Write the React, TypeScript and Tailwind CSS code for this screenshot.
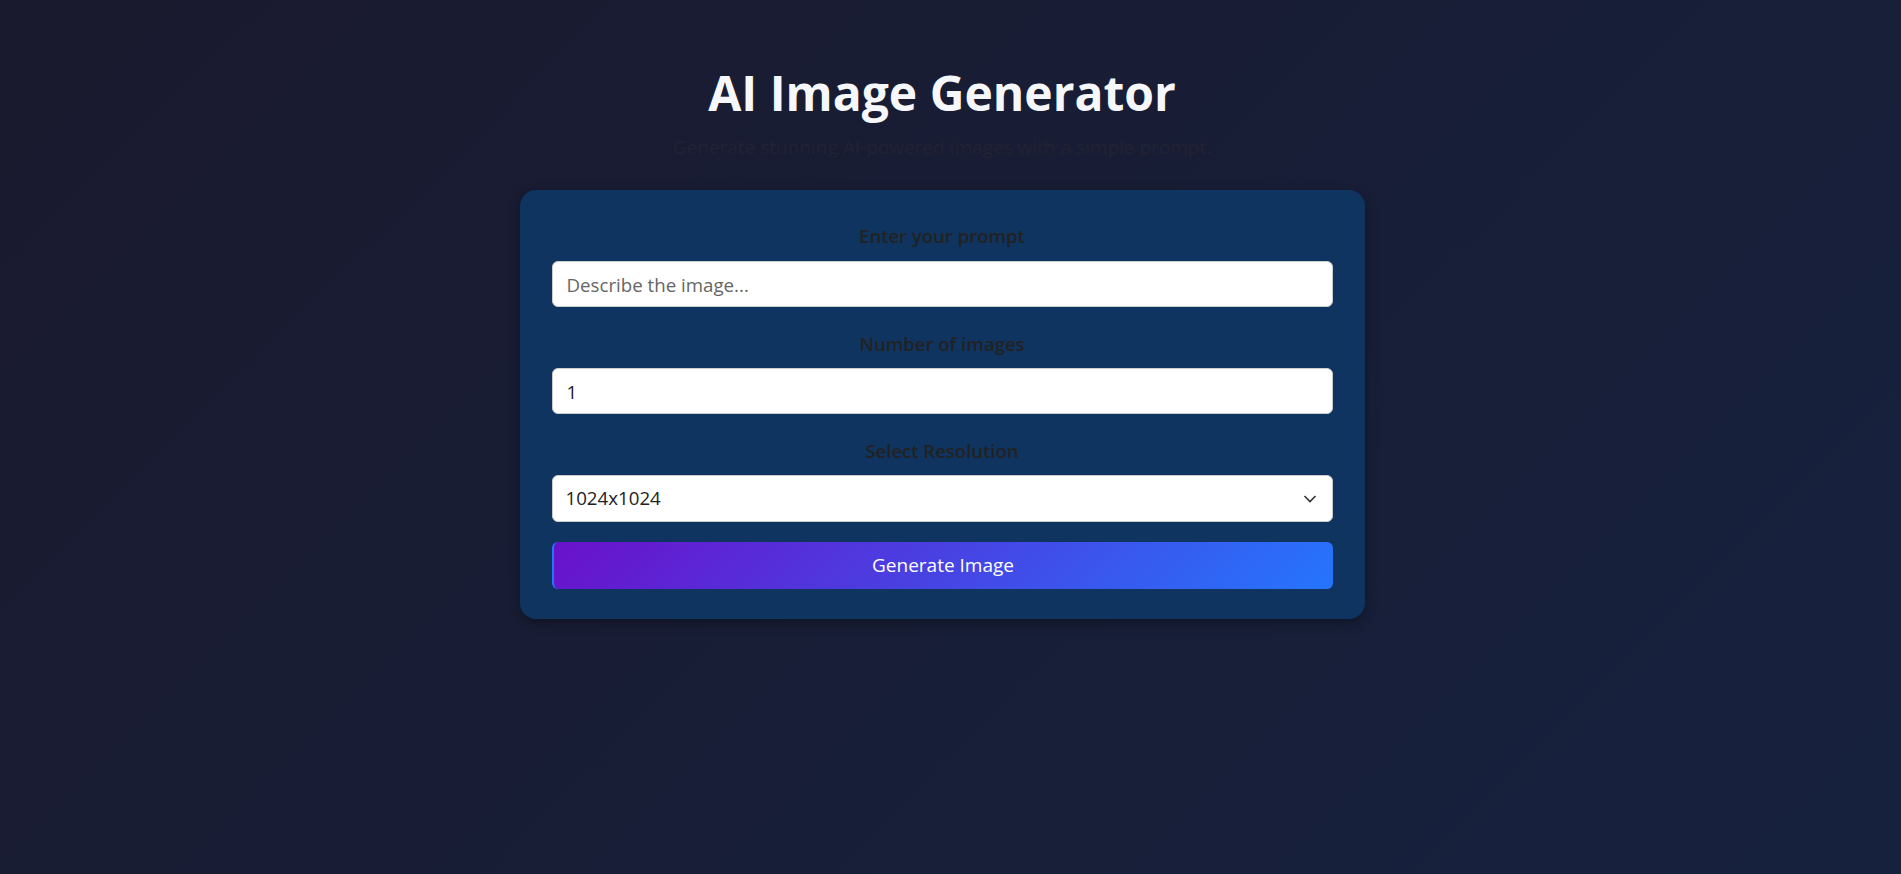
import React, { useState } from "react";

const font = { fontFamily: '"Open Sans", "Noto Sans", sans-serif' };

const App = () => {
  const [prompt, setPrompt] = useState("");
  const [count, setCount] = useState("1");
  const [size, setSize] = useState("1024x1024");

  return (
    <div
      className="min-h-screen w-full bg-[linear-gradient(135deg,#1a1a2e,#16213e)] pr-[17px] pt-[64px]"
      style={font}
    >
      <div className="flex flex-col items-center">
        {/* Heading */}
        <h1 className="text-[48px] font-bold leading-[58px] text-[#f6f7fb]">AI Image Generator</h1>
        <p className="mt-[12px] text-[19px] leading-[27px] text-[#222233]">
          Generate stunning AI-powered images with a simple prompt.
        </p>

        {/* Form card */}
        <div className="mt-[29px] w-[845px] rounded-2xl bg-[#0f3460] px-8 pt-8 pb-[30px] shadow-[0_4px_12px_rgba(0,0,0,0.35)]">
          <div className="flex flex-col">
            <label className="mb-[12px] block text-center text-[18.5px] font-semibold leading-[27px] text-[#222]">
              Enter your prompt
            </label>
            <input
              type="text"
              value={prompt}
              onChange={(e) => setPrompt(e.target.value)}
              placeholder="Describe the image..."
              className="h-[46px] w-full rounded-md border border-[#ccc] bg-white px-[14px] text-[18.7px] text-[#222] placeholder:text-[#666] outline-none"
            />
          </div>

          <div className="mt-[23px] flex flex-col">
            <label className="mb-[11px] block text-center text-[18.5px] font-semibold leading-[27px] text-[#222]">
              Number of images
            </label>
            <input
              type="text"
              value={count}
              onChange={(e) => setCount(e.target.value)}
              className="h-[46px] w-full rounded-md border border-[#ccc] bg-white px-[14px] text-[18.7px] text-[#222] outline-none"
            />
          </div>

          <div className="mt-[23px] flex flex-col">
            <label className="mb-[11px] block text-center text-[18.5px] font-semibold leading-[27px] text-[#222]">
              Select Resolution
            </label>
            <div className="relative">
              <select
                value={size}
                onChange={(e) => setSize(e.target.value)}
                className="h-[47px] w-full appearance-none rounded-md border border-[#ccc] bg-white px-[13px] text-[18.7px] text-[#222] outline-none"
              >
                <option value="256x256">256x256</option>
                <option value="512x512">512x512</option>
                <option value="1024x1024">1024x1024</option>
              </select>
              <svg
                className="pointer-events-none absolute right-[16px] top-1/2 -translate-y-1/2"
                width="14"
                height="9"
                viewBox="0 0 14 9"
                fill="none"
              >
                <path d="M1.5 1.5 7 7l5.5-5.5" stroke="#333" strokeWidth="1.6" />
              </svg>
            </div>
          </div>

          <button className="mt-[20px] h-[47px] w-full rounded-md border-l-2 border-[#2575fc] bg-[linear-gradient(135deg,#6a11cb,#2575fc)] text-[19px] text-white">
            Generate Image
          </button>
        </div>
      </div>
    </div>
  );
};

export default App;
